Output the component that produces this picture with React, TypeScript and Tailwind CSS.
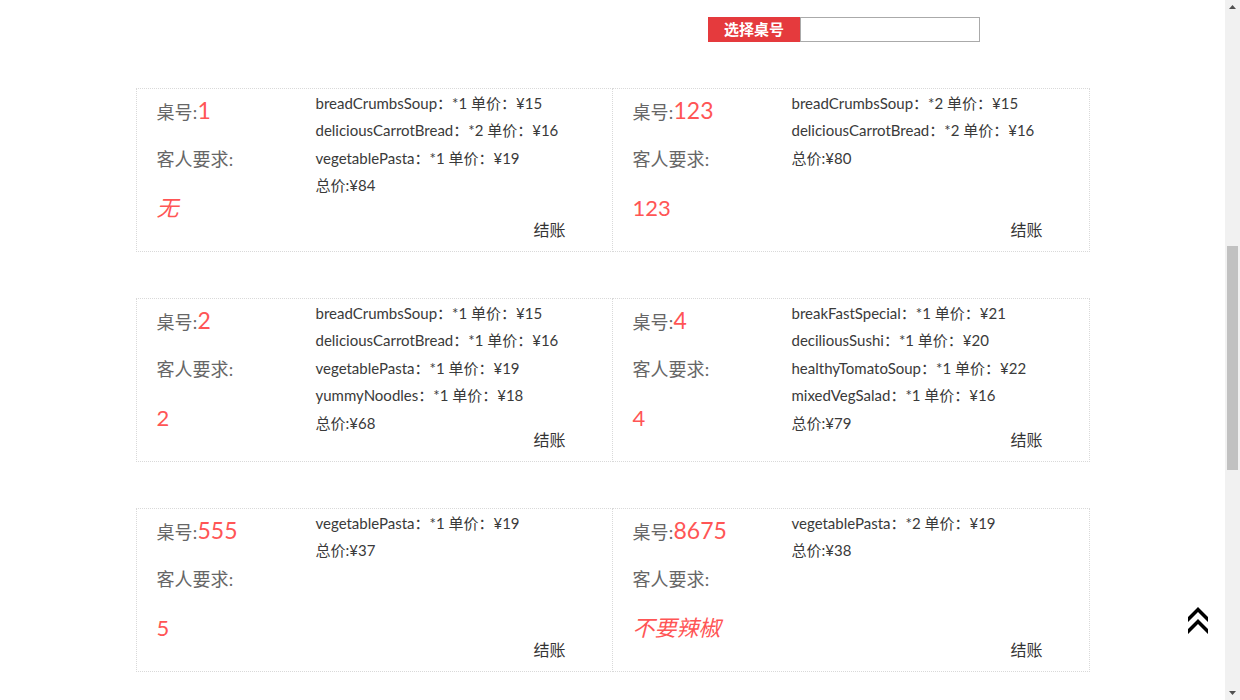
import React, { useEffect } from "react";

type Item = { name: string; count: number; price: number };
type Order = { table: string; items: Item[]; total: number; note: string; slanted?: boolean };

// the list is long; the window is scrolled down to the middle orders
const orders: Order[] = [
  { table: "0", items: [{ name: "yummyNoodles", count: 1, price: 18 }], total: 18, note: "无", slanted: true },
  { table: "01", items: [{ name: "breadCrumbsSoup", count: 1, price: 15 }], total: 15, note: "无", slanted: true },
  { table: "03", items: [{ name: "mixedVegSalad", count: 2, price: 16 }], total: 32, note: "无", slanted: true },
  { table: "05", items: [{ name: "deciliousSushi", count: 1, price: 20 }], total: 20, note: "无", slanted: true },
  { table: "07", items: [{ name: "healthyTomatoSoup", count: 1, price: 22 }], total: 22, note: "无", slanted: true },
  { table: "09", items: [{ name: "vegetablePasta", count: 1, price: 19 }], total: 19, note: "无", slanted: true },
  {
    table: "1",
    items: [
      { name: "breadCrumbsSoup", count: 1, price: 15 },
      { name: "deliciousCarrotBread", count: 2, price: 16 },
      { name: "vegetablePasta", count: 1, price: 19 },
    ],
    total: 84,
    note: "无",
    slanted: true,
  },
  {
    table: "123",
    items: [
      { name: "breadCrumbsSoup", count: 2, price: 15 },
      { name: "deliciousCarrotBread", count: 2, price: 16 },
    ],
    total: 80,
    note: "123",
  },
  {
    table: "2",
    items: [
      { name: "breadCrumbsSoup", count: 1, price: 15 },
      { name: "deliciousCarrotBread", count: 1, price: 16 },
      { name: "vegetablePasta", count: 1, price: 19 },
      { name: "yummyNoodles", count: 1, price: 18 },
    ],
    total: 68,
    note: "2",
  },
  {
    table: "4",
    items: [
      { name: "breakFastSpecial", count: 1, price: 21 },
      { name: "deciliousSushi", count: 1, price: 20 },
      { name: "healthyTomatoSoup", count: 1, price: 22 },
      { name: "mixedVegSalad", count: 1, price: 16 },
    ],
    total: 79,
    note: "4",
  },
  { table: "555", items: [{ name: "vegetablePasta", count: 1, price: 19 }], total: 37, note: "5" },
  { table: "8675", items: [{ name: "vegetablePasta", count: 2, price: 19 }], total: 38, note: "不要辣椒", slanted: true },
  { table: "9", items: [{ name: "breadCrumbsSoup", count: 1, price: 15 }], total: 15, note: "9" },
  { table: "99", items: [{ name: "yummyNoodles", count: 2, price: 18 }], total: 36, note: "无", slanted: true },
  { table: "a1", items: [{ name: "mixedVegSalad", count: 1, price: 16 }], total: 16, note: "无", slanted: true },
  { table: "a2", items: [{ name: "breakFastSpecial", count: 1, price: 21 }], total: 21, note: "无", slanted: true },
  { table: "b1", items: [{ name: "deciliousSushi", count: 2, price: 20 }], total: 40, note: "无", slanted: true },
  { table: "b2", items: [{ name: "vegetablePasta", count: 1, price: 19 }], total: 19, note: "无", slanted: true },
];

function OrderCard({ order, second }: { order: Order; second?: boolean }) {
  return (
    <div
      className={
        "relative flex h-[164px] border border-dotted border-[#d9d9d9] " + (second ? "-ml-px" : "")
      }
    >
      <div className="w-[179px] shrink-0 pl-[20px] pt-[7px]">
        <p className="font-['Liberation_Serif','Noto_Sans_CJK_SC',serif] text-[18px] leading-[28px] text-[#666]">
          桌号:
          <span className="font-['Lato','Noto_Sans_CJK_SC',sans-serif] text-[23px] text-[#f55]">{order.table}</span>
        </p>
        <p className="mt-[19px] font-['Liberation_Serif','Noto_Sans_CJK_SC',serif] text-[18px] leading-[28px] text-[#666]">
          客人要求:
        </p>
        <p
          className={
            "mt-[20px] font-['Lato','Noto_Sans_CJK_SC',sans-serif] text-[22px] leading-[28px] text-[#f55] " +
            (order.slanted ? "italic" : "")
          }
        >
          {order.note}
        </p>
      </div>
      <div className="flex-1 pt-px font-['Lato','Noto_Sans_CJK_SC',sans-serif] text-[15px] leading-[27.4px] text-[#3a3a3a]">
        {order.items.map((it, i) => (
          <p key={i}>
            {it.name}：*{it.count} 单价：¥{it.price}
          </p>
        ))}
        <p>总价:¥{order.total}</p>
      </div>
      <button className="absolute bottom-[12px] right-[46px] font-['Noto_Sans_CJK_SC',sans-serif] text-[16px] leading-[20px] text-[#333]">
        结账
      </button>
    </div>
  );
}

export default function App() {
  useEffect(() => {
    window.scrollTo(0, 720);
  }, []);

  const rows: Order[][] = [];
  for (let i = 0; i < orders.length; i += 2) rows.push(orders.slice(i, i + 2));

  return (
    <div className="min-h-screen bg-white pr-[15px]">
      <div className="fixed left-0 right-[15px] top-0 z-10 flex h-[60px] items-start bg-white pt-[17px]">
        <div className="ml-[708px] flex">
          <span className="flex h-[25px] w-[92px] items-center justify-center bg-[#e53a3d] font-['Noto_Sans_CJK_SC',sans-serif] text-[15px] font-bold text-white">
            选择桌号
          </span>
          <input className="h-[25px] w-[180px] border border-[#aaa] px-1 text-[14px] outline-none" />
        </div>
      </div>

      <div className="mx-auto flex w-[954px] flex-col gap-[46px] pb-[72px] pt-[178px]">
        {rows.map((row, i) => (
          <div key={i} className="grid grid-cols-2">
            <OrderCard order={row[0]} />
            {row[1] && <OrderCard order={row[1]} second />}
          </div>
        ))}
      </div>

      <button className="fixed bottom-[65px] right-[32px] z-10">
        <svg width="20" height="28" viewBox="0 0 20 28">
          <polygon points="10,0 20,10 20,15 10,5 0,15 0,10" fill="#000" />
          <polygon points="10,12 20,22 20,27 10,17 0,27 0,22" fill="#000" />
        </svg>
      </button>

      {/* page scrollbar */}
      <div className="fixed right-0 top-0 z-20 flex h-[700px] w-[15px] flex-col items-center bg-[#f1f1f1]">
        <svg width="15" height="15" viewBox="0 0 15 15">
          <polygon points="4,9 11,9 7.5,5" fill="#505050" />
        </svg>
        <div className="mt-[231px] h-[224px] w-[11px] bg-[#c1c1c1]" />
        <div className="flex-1" />
        <svg width="15" height="15" viewBox="0 0 15 15">
          <polygon points="4,6 11,6 7.5,10" fill="#505050" />
        </svg>
      </div>
    </div>
  );
}
